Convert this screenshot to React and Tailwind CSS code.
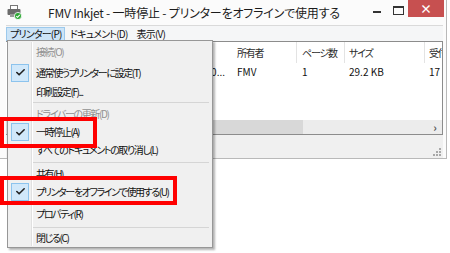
import { Check } from 'lucide-react';

const menuItems = [
  { label: '接続(O)', h: 'h-[20px]', disabled: true },
  { label: '通常使うプリンターに設定(T)', h: 'h-[21px]', checked: true },
  { label: '印刷設定(F)...', h: 'h-[18px]' },
  { sep: true, h: 'h-[3px]' },
  { label: 'ドライバーの更新(D)', h: 'h-[19px]', disabled: true },
  { label: '一時停止(A)', h: 'h-[18px]', checked: true },
  { label: 'すべてのドキュメントの取り消し(L)', h: 'h-[18px]' },
  { sep: true, h: 'h-[7px]' },
  { label: '共有(H)', h: 'h-[15px]' },
  { label: 'プリンターをオフラインで使用する(U)', h: 'h-[21px]', checked: true },
  { label: 'プロパティ(R)', h: 'h-[23px]' },
  { sep: true, h: 'h-[4px]' },
  { label: '閉じる(C)', h: 'h-[18px]' },
];

function PrinterIcon() {
  return (
    <svg width="15" height="15" viewBox="0 0 15 15">
      <rect x="3.5" y="0.5" width="7" height="4" fill="#fff" stroke="#777" />
      <rect x="0.5" y="4" width="13" height="6" rx="1" fill="#6b6b6b" />
      <rect x="3" y="9" width="8" height="3" fill="#9a9a9a" />
      <circle cx="11" cy="11" r="3.6" fill="#2fa836" stroke="#fff" strokeWidth="0.8" />
      <path d="M9.3 11.1 L10.6 12.3 L12.7 9.9" fill="none" stroke="#fff" strokeWidth="1.1" />
    </svg>
  );
}

function MenuRow({ item }) {
  if (item.sep) {
    return (
      <div className={`${item.h} flex items-center pl-[25px] pr-[3px]`}>
        <div className="h-px w-full bg-[#d5d5d5]" />
      </div>
    );
  }
  return (
    <div className={`${item.h} flex items-center`}>
      <div className="w-[24px] flex justify-center">
        {item.checked && (
          <div className="w-[18px] h-[18px] bg-[#d1e8fa] border border-[#8cc3ed] flex items-center justify-center">
            <Check size={11} strokeWidth={3.5} className="text-[#222]" />
          </div>
        )}
      </div>
      <span className={`pl-[4px] whitespace-nowrap tracking-[-1.4px] ${item.disabled ? 'text-[#909090]' : 'text-[#111]'}`}>{item.label}</span>
    </div>
  );
}

export default function App() {
  return (
    <div className="w-[450px] h-[253px] bg-white relative overflow-hidden font-['Noto_Sans_CJK_JP',sans-serif] [font-feature-settings:'palt'] text-[10px] leading-none">
      {/* window */}
      <div className="w-[447px] h-[159px] bg-[#fbfbfb] border-r border-b border-[#b9b9b9] flex flex-col">
        <div className="h-[25px] flex items-start shrink-0">
          <div className="pl-[7px] pt-[5px]"><PrinterIcon /></div>
          <div className="pl-[26px] pt-[7px] text-[12px] text-[#1b1b1b] tracking-[-0.2px] whitespace-nowrap">FMV Inkjet - 一時停止 - プリンターをオフラインで使用する</div>
          <div className="ml-auto flex items-start">
            <div className="w-[8px] h-[1.5px] bg-[#333] mt-[11px] mr-[12px]" />
            <div className="w-[11px] h-[9px] border border-[#333] border-t-2 mt-[6px] mr-[4px]" />
            <div className="w-[36px] h-[17px] bg-[#c75050] text-white flex items-center justify-center text-[12px] font-bold mr-[2px]">×</div>
          </div>
        </div>
        <div className="ml-[6px] mr-[3px] flex-1 flex flex-col border-t border-[#dadada] bg-[#f0f0f0]">
          <div className="h-[15px] flex items-center bg-[#f5f6f7] text-[#111] shrink-0 whitespace-nowrap tracking-[-0.8px]">
            <div className="h-[14px] w-[59px] bg-[#cce4f7] border border-[#9cc9ec] flex items-center pl-[3px]">プリンター(P)</div>
            <div className="pl-[5px]">ドキュメント(D)</div>
            <div className="pl-[9px]">表示(V)</div>
          </div>
          <div className="h-[94px] bg-white border-t border-r border-b border-[#8c8c8c] flex flex-col shrink-0">
            <div className="h-[21px] flex items-center text-[#2b2b2b] whitespace-nowrap tracking-[-1.2px]">
              <div className="w-[225px]" />
              <div className="w-[66px] h-full flex items-center pl-[6px] border-r border-[#e3e3e3]">所有者</div>
              <div className="w-[48px] h-full flex items-center pl-[5px] border-r border-[#e3e3e3]">ページ数</div>
              <div className="w-[80px] h-full flex items-center pl-[4px] border-r border-[#e3e3e3]">サイズ</div>
              <div className="flex-1 h-full flex items-center pl-[4px] overflow-hidden">受付</div>
            </div>
            <div className="h-[18px] flex items-center text-[#111] whitespace-nowrap">
              <div className="w-[225px] pr-[6px] flex justify-end">文書10...</div>
              <div className="w-[66px] pl-[6px]">FMV</div>
              <div className="w-[48px] pl-[5px]">1</div>
              <div className="w-[80px] pl-[4px]">29.2 KB</div>
              <div className="flex-1 pl-[4px] overflow-hidden">17</div>
            </div>
            <div className="flex-1" />
            <div className="h-[14px] flex bg-[#ececec]">
              <div className="w-[297px] bg-[#d8d8d8]" />
              <div className="flex-1" />
              <div className="w-[14px] flex items-center justify-center text-[#555] text-[11px] font-bold">›</div>
            </div>
          </div>
          <div className="flex-1 flex items-end justify-end pr-[2px] pb-[2px]">
            <div className="grid grid-cols-3 gap-[1px]">
              <span /><span /><span className="w-[2px] h-[2px] bg-[#a8a8a8]" />
              <span /><span className="w-[2px] h-[2px] bg-[#a8a8a8]" /><span className="w-[2px] h-[2px] bg-[#a8a8a8]" />
              <span className="w-[2px] h-[2px] bg-[#a8a8a8]" /><span className="w-[2px] h-[2px] bg-[#a8a8a8]" /><span className="w-[2px] h-[2px] bg-[#a8a8a8]" />
            </div>
          </div>
        </div>
      </div>

      {/* dropdown menu */}
      <div className="absolute left-[7px] top-[40px] w-[206px] h-[208px] bg-[#f0f0f0] border border-[#979797] shadow-[2px_2px_2px_rgba(0,0,0,0.3)] pt-[1px]">
        <div className="absolute left-[23px] top-[1px] bottom-[1px] w-px bg-[#e0e0e0]" />
        <div className="absolute left-[24px] top-[1px] bottom-[1px] w-px bg-white" />
        <div className="relative flex flex-col">
          {menuItems.map((item, i) => <MenuRow key={i} item={item} />)}
        </div>
      </div>

      {/* red highlight boxes */}
      <div className="absolute left-0 top-[117px] w-[97px] h-[31px] border-4 border-[#ff0000]" />
      <div className="absolute left-0 top-[176px] w-[177px] h-[29px] border-4 border-[#ff0000]" />
    </div>
  );
}
